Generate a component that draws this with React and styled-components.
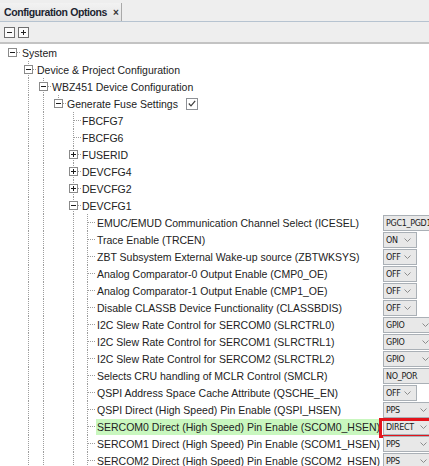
import React from "react";
import styled, { createGlobalStyle } from "styled-components";

const GlobalStyle = createGlobalStyle`
  html, body {
    margin: 0;
    padding: 0;
    background: #ffffff;
  }
  body {
    width: 429px;
    height: 466px;
    overflow: hidden;
    font-family: "Liberation Sans", Arial, sans-serif;
  }
`;

// tree geometry: handle column and text start for each depth
const COLS = [12, 28, 43, 58, 73, 87];
const TEXT = [22, 37, 52, 67, 82, 97];
const ROW_H = 17;

const Panel = styled.div`
  width: 429px;
  height: 466px;
  overflow: hidden;
  display: flex;
  flex-direction: column;
  background: #ffffff;
`;

const TabBar = styled.div`
  height: 21px;
  background: #eeeeee;
  border-bottom: 1px solid #b6c3d0;
  display: flex;
  align-items: flex-end;
  flex: none;
`;

const Tab = styled.div`
  height: 18px;
  width: 122px;
  box-sizing: border-box;
  padding: 0 0 0 4px;
  display: flex;
  align-items: center;
  gap: 6px;
  white-space: nowrap;
  background: linear-gradient(#f2f2f2, #e4e4e4);
  border-right: 1px solid #a9a9a9;
  font-size: 10.5px;
  font-weight: bold;
  letter-spacing: -0.4px;
  color: #1c2430;
`;

const Close = styled.span`
  font-size: 10px;
  color: #333333;
`;

const Toolbar = styled.div`
  height: 20px;
  background: #eeeeee;
  border-bottom: 2px solid #c3c3c3;
  display: flex;
  align-items: center;
  gap: 3px;
  padding-left: 4px;
  flex: none;
`;

const ToolButton = styled.span`
  width: 9px;
  height: 9px;
  border: 1px solid #6e6e6e;
  background: #fbfbfb;
  display: flex;
  align-items: center;
  justify-content: center;
`;

const Tree = styled.div`
  display: flex;
  flex-direction: column;
  flex: 1;
`;

const Row = styled.div`
  height: ${ROW_H}px;
  display: flex;
  align-items: center;
  font-size: 10.5px;
  color: #222222;
  white-space: nowrap;
  flex: none;
`;

const Label = styled.span`
  height: 16px;
  line-height: 16px;
  padding: 0 2px 0 1px;
  background: ${(p) => (p.$highlight ? "#c9f7bf" : "transparent")};
`;

const Spacer = styled.div`
  flex: 1;
`;

const ValueCell = styled.div`
  width: 46px;
  height: ${ROW_H}px;
  flex: none;
  position: relative;
`;

const Combo = styled.div`
  width: ${(p) => p.$w}px;
  height: 16px;
  margin-top: 1px;
  box-sizing: border-box;
  border: 1px solid #aab0b6;
  background: #e8e8e8;
  display: flex;
  align-items: center;
  justify-content: space-between;
  padding: 0 5px 0 2px;
  font-family: "DejaVu Sans", sans-serif;
  font-size: 8px;
  letter-spacing: -0.3px;
  color: #1a1a1a;
`;

const Marker = styled.div`
  position: absolute;
  left: -4px;
  top: 0;
  width: 60px;
  height: 20px;
  box-sizing: border-box;
  border: 3px solid #e3141c;
  pointer-events: none;
`;

const CheckBox = styled.span`
  width: 10px;
  height: 10px;
  margin-left: 6px;
  border: 1px solid #8d9095;
  background: #ffffff;
  display: flex;
  align-items: center;
  justify-content: center;
`;

const Chevron = () => (
  <svg width="7" height="4" viewBox="0 0 7 4">
    <polyline points="0.5,0.5 3.5,3.5 6.5,0.5" fill="none" stroke="#8c8c8c" strokeWidth="1" />
  </svg>
);

const Guides = ({ level, kind, rails, hasNext }) => {
  const c = COLS[level];
  const w = TEXT[level] - 1;
  const mid = 8.5;
  const dotted = { stroke: "#9d9d9d", strokeWidth: 1, strokeDasharray: "1 1", shapeRendering: "crispEdges" };
  return (
    <svg width={w} height={ROW_H} style={{ flex: "none" }}>
      {rails.map((k) => (
        <line key={k} x1={COLS[k] + 0.5} y1={0} x2={COLS[k] + 0.5} y2={ROW_H} {...dotted} />
      ))}
      {level > 0 && <line x1={c + 0.5} y1={0} x2={c + 0.5} y2={hasNext ? ROW_H : mid} {...dotted} />}
      <line x1={c + 1} y1={mid} x2={w} y2={mid} {...dotted} />
      {kind !== "leaf" && (
        <g shapeRendering="crispEdges">
          <rect x={c - 3.5} y={4.5} width={8} height={8} fill="#ffffff" stroke="#8a8a8a" />
          <line x1={c - 2} y1={mid} x2={c + 3} y2={mid} stroke="#1c1c1c" />
          {kind === "collapsed" && <line x1={c + 0.5} y1={6} x2={c + 0.5} y2={11} stroke="#1c1c1c" />}
        </g>
      )}
    </svg>
  );
};

const LEAF_RAILS = [1, 2, 4];

const rows = [
  { level: 0, kind: "open", label: "System", rails: [] },
  { level: 1, kind: "open", label: "Device & Project Configuration", rails: [], next: true },
  { level: 2, kind: "open", label: "WBZ451 Device Configuration", rails: [1], next: true },
  { level: 3, kind: "open", label: "Generate Fuse Settings", rails: [1, 2], check: true },
  { level: 4, kind: "leaf", label: "FBCFG7", rails: [1, 2], next: true },
  { level: 4, kind: "leaf", label: "FBCFG6", rails: [1, 2], next: true },
  { level: 4, kind: "collapsed", label: "FUSERID", rails: [1, 2], next: true },
  { level: 4, kind: "collapsed", label: "DEVCFG4", rails: [1, 2], next: true },
  { level: 4, kind: "collapsed", label: "DEVCFG2", rails: [1, 2], next: true },
  { level: 4, kind: "open", label: "DEVCFG1", rails: [1, 2], next: true },
  { label: "EMUC/EMUD Communication Channel Select (ICESEL)", value: "PGC1_PGD1", w: 72 },
  { label: "Trace Enable (TRCEN)", value: "ON", w: 34 },
  { label: "ZBT Subsystem External Wake-up source (ZBTWKSYS)", value: "OFF", w: 34 },
  { label: "Analog Comparator-0 Output Enable (CMP0_OE)", value: "OFF", w: 34 },
  { label: "Analog Comparator-1 Output Enable (CMP1_OE)", value: "OFF", w: 34 },
  { label: "Disable CLASSB Device Functionality (CLASSBDIS)", value: "OFF", w: 34 },
  { label: "I2C Slew Rate Control for SERCOM0 (SLRCTRL0)", value: "GPIO", w: 52 },
  { label: "I2C Slew Rate Control for SERCOM1 (SLRCTRL1)", value: "GPIO", w: 52 },
  { label: "I2C Slew Rate Control for SERCOM2 (SLRCTRL2)", value: "GPIO", w: 52 },
  { label: "Selects CRU handling of MCLR Control (SMCLR)", value: "NO_POR", w: 72 },
  { label: "QSPI Address Space Cache Attribute (QSCHE_EN)", value: "OFF", w: 34 },
  { label: "QSPI Direct (High Speed) Pin Enable (QSPI_HSEN)", value: "PPS", w: 50 },
  { label: "SERCOM0 Direct (High Speed) Pin Enable (SCOM0_HSEN)", value: "DIRECT", w: 50, selected: true },
  { label: "SERCOM1 Direct (High Speed) Pin Enable (SCOM1_HSEN)", value: "PPS", w: 50 },
  { label: "SERCOM2 Direct (High Speed) Pin Enable (SCOM2_HSEN)", value: "PPS", w: 50 },
].map((r) => (r.level === undefined ? { level: 5, kind: "leaf", rails: LEAF_RAILS, next: true, ...r } : r));

export default function App() {
  return (
    <>
      <GlobalStyle />
      <Panel>
        <TabBar>
          <Tab>
            Configuration Options
            <Close>×</Close>
          </Tab>
        </TabBar>
        <Toolbar>
          <ToolButton>
            <svg width="7" height="7">
              <line x1="1" y1="3.5" x2="6" y2="3.5" stroke="#222" />
            </svg>
          </ToolButton>
          <ToolButton>
            <svg width="7" height="7">
              <line x1="1" y1="3.5" x2="6" y2="3.5" stroke="#222" />
              <line x1="3.5" y1="1" x2="3.5" y2="6" stroke="#222" />
            </svg>
          </ToolButton>
        </Toolbar>
        <Tree>
          {rows.map((r, i) => (
            <Row key={i}>
              <Guides level={r.level} kind={r.kind} rails={r.rails} hasNext={r.next} />
              <Label $highlight={r.selected}>{r.label}</Label>
              {r.check && (
                <CheckBox>
                  <svg width="8" height="7" viewBox="0 0 8 7">
                    <polyline points="0.8,3.5 3,5.8 7.2,0.8" fill="none" stroke="#3c3c3c" strokeWidth="1.2" />
                  </svg>
                </CheckBox>
              )}
              <Spacer />
              {r.value && (
                <ValueCell>
                  <Combo $w={r.w}>
                    <span>{r.value}</span>
                    {r.w < 60 && <Chevron />}
                  </Combo>
                  {r.selected && <Marker />}
                </ValueCell>
              )}
            </Row>
          ))}
        </Tree>
      </Panel>
    </>
  );
}
